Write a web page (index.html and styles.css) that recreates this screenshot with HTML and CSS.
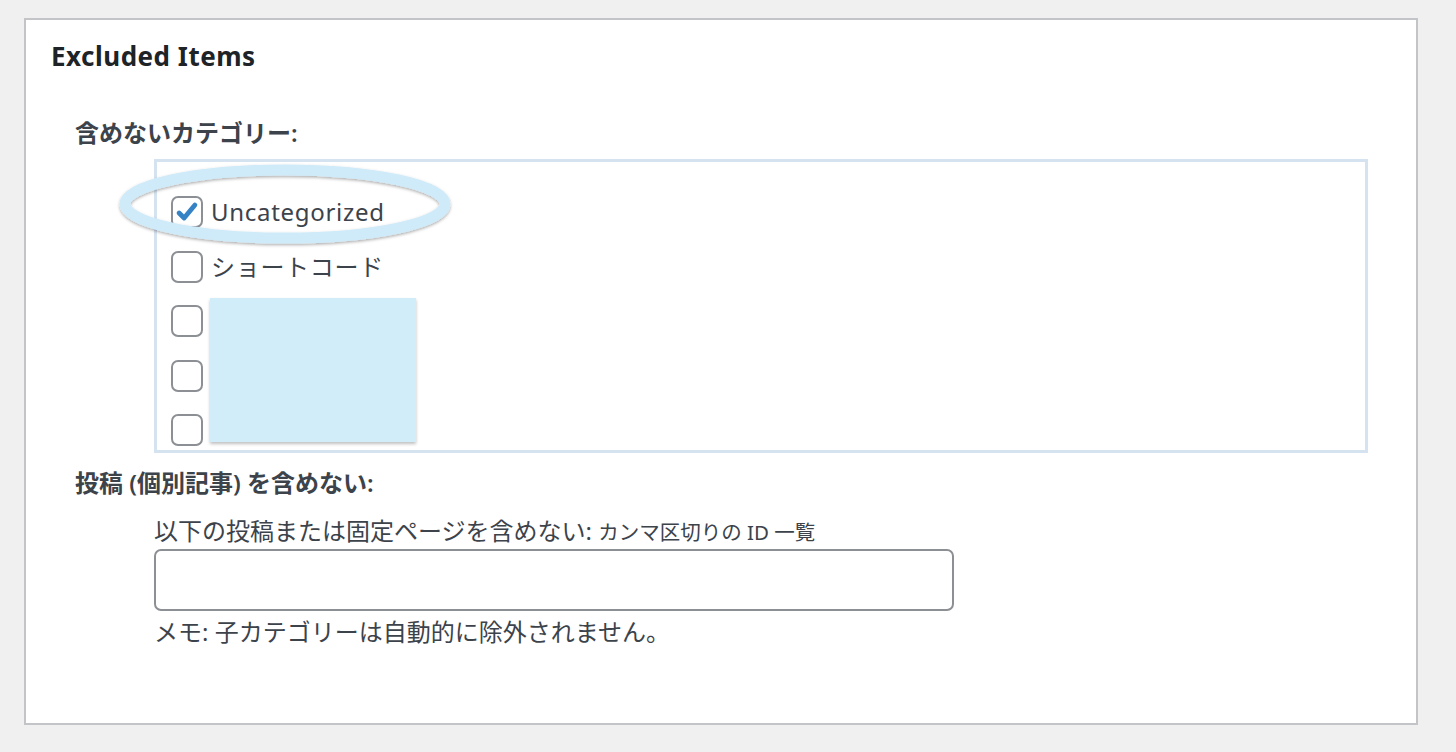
FILE: index.html
```html
<!DOCTYPE html>
<html lang="ja">
<head>
  <meta charset="UTF-8" />
  <title>Excluded Items</title>
  <link rel="stylesheet" href="styles.css">
</head>
<body>
  <div class="panel">
    <h2 class="panel-title">Excluded Items</h2>

    <div class="field">
      <div class="field-label">含めないカテゴリー:</div>
      <div class="cat-wrap">
        <ul class="cat-list">
          <li class="cat-row">
            <span class="check is-checked">
              <svg viewBox="0 0 20 20" width="24" height="24"><path d="M3.4 10.8 L7.6 15 L16.6 4.2" fill="none" stroke="#3582c4" stroke-width="4" stroke-linecap="round" stroke-linejoin="round"/></svg>
            </span>
            <span class="cat-name">Uncategorized</span>
          </li>
          <li class="cat-row"><span class="check"></span><span class="cat-name">ショートコード</span></li>
          <li class="cat-row"><span class="check"></span></li>
          <li class="cat-row"><span class="check"></span></li>
          <li class="cat-row"><span class="check"></span></li>
        </ul>
        <div class="redact"></div>
        <svg class="ring" width="360" height="110" viewBox="0 0 360 110">
          <defs>
            <filter id="ringShadow" x="-10%" y="-30%" width="120%" height="160%">
              <feDropShadow dx="0" dy="1.5" stdDeviation="1.5" flood-color="#000" flood-opacity="0.32"/>
            </filter>
          </defs>
          <ellipse cx="180" cy="52" rx="160" ry="34" fill="none" stroke="#cfebf9" stroke-width="11" filter="url(#ringShadow)"/>
        </svg>
      </div>
    </div>

    <div class="field">
      <div class="field-label">投稿 (個別記事) を含めない:</div>
      <div class="post-field">
        <label class="sub-label" for="exclude-ids">以下の投稿または固定ページを含めない: <small>カンマ区切りの ID 一覧</small></label>
        <input type="text" id="exclude-ids" class="text-input" />
        <p class="note">メモ: 子カテゴリーは自動的に除外されません。</p>
      </div>
    </div>
  </div>
</body>
</html>
```

FILE: styles.css
```css
:root {
  --page-bg: #f0f0f1;
  --panel-border: #c3c4c7;
  --title: #1d2327;
  --text: #3c434a;
  --box-border: #d5e2f0;
  --control-border: #8c8f94;
}
html, body { margin: 0; padding: 0; }
body {
  background: var(--page-bg);
  color: var(--text);
  font-family: "Noto Sans", "Noto Sans CJK JP", sans-serif;
  font-size: 24px;
  line-height: 1.4;
  padding: 18px 0 0 24px;
}
.panel {
  box-sizing: border-box;
  width: 1394px;
  height: 707px;
  background: #fff;
  border: 2px solid var(--panel-border);
  padding: 19px 25px;
}
.panel-title {
  margin: 0;
  font-size: 26px;
  line-height: 34px;
  font-weight: 700;
  letter-spacing: 0.5px;
  color: var(--title);
}
.field { padding-left: 24px; }
.field-label {
  font-weight: 600;
  line-height: 34px;
}
.panel-title + .field { margin-top: 43px; }
.field + .field { margin-top: 13px; }

.cat-wrap {
  position: relative;
  margin: 9px 0 0 79px;
  width: 1214px;
}
.cat-list {
  list-style: none;
  margin: 0;
  box-sizing: border-box;
  height: 294px;
  padding: 23px 0 0 14px;
  border: 3px solid var(--box-border);
  overflow: hidden;
}
.cat-row {
  display: flex;
  align-items: center;
  gap: 8px;
  height: 54.5px;
}
.check {
  box-sizing: border-box;
  width: 32px;
  height: 32px;
  border: 2px solid var(--control-border);
  border-radius: 7px;
  display: flex;
  align-items: center;
  justify-content: center;
  flex: none;
}
.cat-name { white-space: nowrap; letter-spacing: 0.7px; }

.redact {
  position: absolute;
  left: 56px;
  top: 139px;
  width: 206px;
  height: 144px;
  background: #d1edfa;
  box-shadow: 0 2px 3px rgba(0, 0, 0, 0.25);
}
.ring {
  position: absolute;
  left: -49px;
  top: -7px;
  pointer-events: none;
}

.post-field { padding-left: 79px; margin-top: 14px; }
.sub-label { display: block; line-height: 34px; }
.sub-label small { font-size: 20.5px; }
.text-input {
  display: block;
  box-sizing: border-box;
  width: 800px;
  height: 62px;
  border: 2px solid var(--control-border);
  border-radius: 7px;
  background: #fff;
  font: inherit;
  padding: 0 12px;
}
.note { margin: 4px 0 0; line-height: 34px; }
```
